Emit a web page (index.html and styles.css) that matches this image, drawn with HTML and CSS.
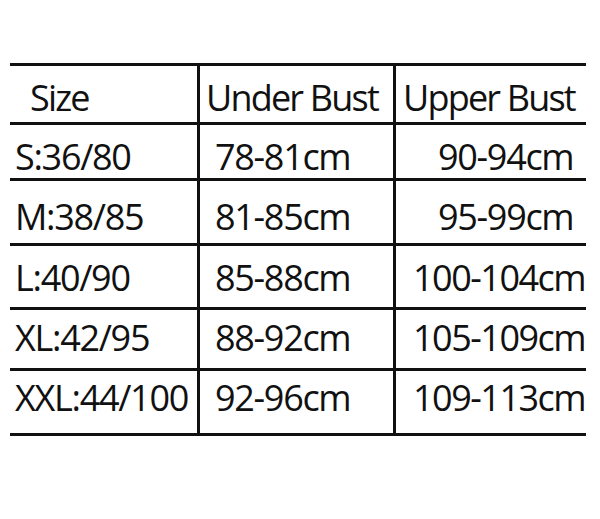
FILE: index.html
```html
<!DOCTYPE html>
<html>
<head>
<meta charset="utf-8">
<link rel="stylesheet" href="styles.css">
</head>
<body>
<div class="chart">
  <div class="row r0">
    <div class="cell size head">Size</div>
    <div class="cell under head">Under Bust</div>
    <div class="cell upper head">Upper Bust</div>
  </div>
  <div class="row r1">
    <div class="cell size">S:36/80</div>
    <div class="cell under">78-81cm</div>
    <div class="cell upper two">90-94cm</div>
  </div>
  <div class="row r2">
    <div class="cell size">M:38/85</div>
    <div class="cell under">81-85cm</div>
    <div class="cell upper two">95-99cm</div>
  </div>
  <div class="row r3">
    <div class="cell size">L:40/90</div>
    <div class="cell under">85-88cm</div>
    <div class="cell upper three">100-104cm</div>
  </div>
  <div class="row r4">
    <div class="cell size">XL:42/95</div>
    <div class="cell under">88-92cm</div>
    <div class="cell upper three">105-109cm</div>
  </div>
  <div class="row r5">
    <div class="cell size">XXL:44/100</div>
    <div class="cell under">92-96cm</div>
    <div class="cell upper three">109-113cm</div>
  </div>
</div>
</body>
</html>
```

FILE: styles.css
```css
html, body {
  margin: 0;
  padding: 0;
  background: #ffffff;
}
body {
  font-family: "Open Sans", "Noto Sans", sans-serif;
  color: #111111;
}
.chart {
  margin: 63px 0 0 10px;
  width: 576px;
  border-top: 3px solid #111111;
}
.row {
  display: grid;
  grid-template-columns: 187px 196px 193px;
  border-bottom: 3px solid #111111;
  box-sizing: border-box;
}
.cell {
  box-sizing: border-box;
  font-size: 36px;
  font-weight: 500;
  line-height: 36px;
  letter-spacing: -1.3px;
  white-space: nowrap;
}
.under, .upper {
  border-left: 3px solid #111111;
}
.size { padding-left: 5px; }
.size.head { padding-left: 20px; }
.size.wide { letter-spacing: -1px; }
.head { letter-spacing: -1.8px; }
.under { padding-left: 15px; }
.under.head { padding-left: 6px; }
.upper.head { padding-left: 7px; }
.upper.two { padding-left: 42px; }
.upper.three { padding-left: 17px; letter-spacing: -1.5px; }

.r0 { height: 59px; }
.r1 { height: 56px; }
.r2 { height: 65px; }
.r3 { height: 64px; }
.r4 { height: 61px; }
.r5 { height: 65px; }

.r0 .cell { padding-top: 14px; }
.r1 .cell { padding-top: 14px; }
.r2 .cell { padding-top: 18px; }
.r3 .cell { padding-top: 14px; }
.r4 .cell { padding-top: 10px; }
.r5 .cell { padding-top: 9px; }
```
